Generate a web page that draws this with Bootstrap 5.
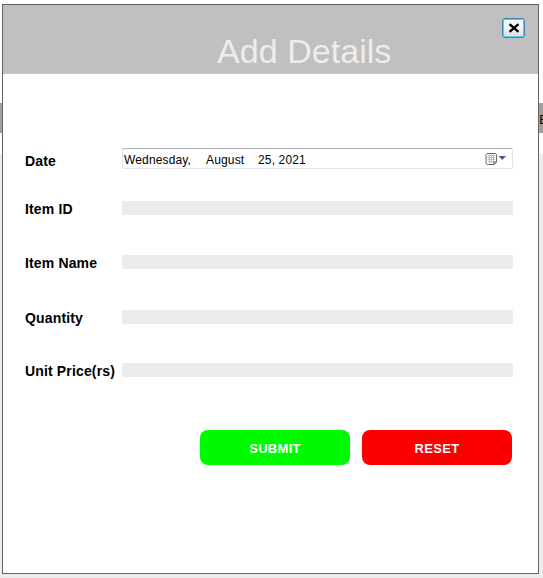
<!DOCTYPE html>
<html lang="en">
<head>
<meta charset="utf-8">
<meta name="viewport" content="width=device-width, initial-scale=1">
<title>Add Details</title>
<link href="https://cdn.jsdelivr.net/npm/bootstrap@5.3.0/dist/css/bootstrap.min.css" rel="stylesheet">
<style>
body{width:543px;height:578px;font-family:"Liberation Sans",Arial,sans-serif;color:#000;line-height:1}
.backdrop-strip{height:30px;margin-top:103px;margin-right:-5px;background:#a0a0a0;font-size:13px;line-height:34px}
.backdrop-body{height:424px;margin-top:21px;background:#ececec}
.dialog-window{top:4px;left:2px;width:537px;height:570px;border:1px solid #646464;background:#fff}
.dialog-head{height:69px;background:#c0c0c0}
.dialog-title{font-size:34px;line-height:36px;color:#ededed;padding:28px 0 0 214px;letter-spacing:.05px}
.close-btn{top:13px;right:13px;width:23px;height:20px;border:1px solid #3a86b4;border-radius:3px;background:linear-gradient(#f5f5f5 45%,#dcdcdc);box-shadow:inset 0 0 0 1px #4fd0f5}
.dialog-form{padding:74px 25px 0 22px}
.field-row{height:14px}
.field-label{width:97px;font-size:14px;line-height:16px;font-weight:700;white-space:nowrap;letter-spacing:.15px}
.field-fill{height:14px;background:#ececec;border:0;border-radius:0}
.date-row{height:21px;margin-bottom:32px}
.date-row .field-label{padding-top:5px}
.date-box{height:21px;border:1px solid #e2e3ea;border-top-color:#abadb3;border-radius:2px;font-size:12px;letter-spacing:.15px;padding:1px 5px 0 1px}
.date-text{padding-top:2px}
.date-box .day{width:82px}
.date-box .month{width:52px}
.gap-id{margin-bottom:40px}
.gap-name{margin-bottom:41px}
.gap-qty{margin-bottom:39px}
.gap-price{margin-bottom:53px}
.action-row{padding-right:1px}
.action-btn{width:150px;height:35px;border:0;border-radius:8px;color:#fff;font-size:13px;font-weight:700;line-height:37px;letter-spacing:.3px}
.go-green{background:#00fa00}
.stop-red{background:#fa0000}
</style>
</head>
<body class="position-relative overflow-hidden bg-white">
<div class="d-flex flex-column">
  <div class="backdrop-strip text-end">SE</div>
  <div class="backdrop-body"></div>
</div>
<section class="dialog-window position-absolute">
  <header class="dialog-head position-relative">
    <h1 class="dialog-title fw-normal m-0">Add Details</h1>
    <button type="button" aria-label="Close" class="close-btn position-absolute p-0 d-flex align-items-center justify-content-center">
      <svg width="12" height="10" viewBox="0 0 12 10"><path d="M1.5 1.2 10.5 8.8M10.5 1.2 1.5 8.8" stroke="#000" stroke-width="2.3"/></svg>
    </button>
  </header>
  <form class="dialog-form">
    <div class="date-row d-flex">
      <span class="field-label">Date</span>
      <div class="date-box flex-grow-1 d-flex align-items-center">
        <div class="date-text d-flex"><span class="day">Wednesday,</span><span class="month">August</span><span>25, 2021</span></div>
        <svg class="ms-auto" width="22" height="14" viewBox="0 0 22 14">
          <path d="M2 1.5h8.5l1 1v7.5l-2.5 2.5h-7l-1-1v-9z" fill="#f4f6fa" stroke="#6f676c"/>
          <path d="M3 3h7v8H3z" fill="#b4bfd0"/>
          <path d="M3 4.5h7M3 6.5h7M3 8.5h7M3 10.5h7" stroke="#fff" stroke-width="1" stroke-dasharray="1 1"/>
          <path d="M9 12.5v-2.5h2.5z" fill="#fff" stroke="#6f676c"/>
          <path d="M13.5 4H21l-3.75 4z" fill="#44598e"/>
        </svg>
      </div>
    </div>
    <div class="field-row gap-id d-flex"><label class="field-label" for="f1">Item ID</label><input id="f1" class="field-fill flex-grow-1"></div>
    <div class="field-row gap-name d-flex"><label class="field-label" for="f2">Item Name</label><input id="f2" class="field-fill flex-grow-1"></div>
    <div class="field-row gap-qty d-flex"><label class="field-label" for="f3">Quantity</label><input id="f3" class="field-fill flex-grow-1"></div>
    <div class="field-row gap-price d-flex"><label class="field-label" for="f4">Unit Price(rs)</label><input id="f4" class="field-fill flex-grow-1"></div>
    <div class="action-row d-flex">
      <button type="button" class="action-btn go-green p-0 me-2 ms-auto">SUBMIT</button>
      <button type="button" class="action-btn stop-red p-0 ms-1">RESET</button>
    </div>
  </form>
</section>
<script src="https://cdn.jsdelivr.net/npm/bootstrap@5.3.0/dist/js/bootstrap.bundle.min.js"></script>
</body>
</html>
